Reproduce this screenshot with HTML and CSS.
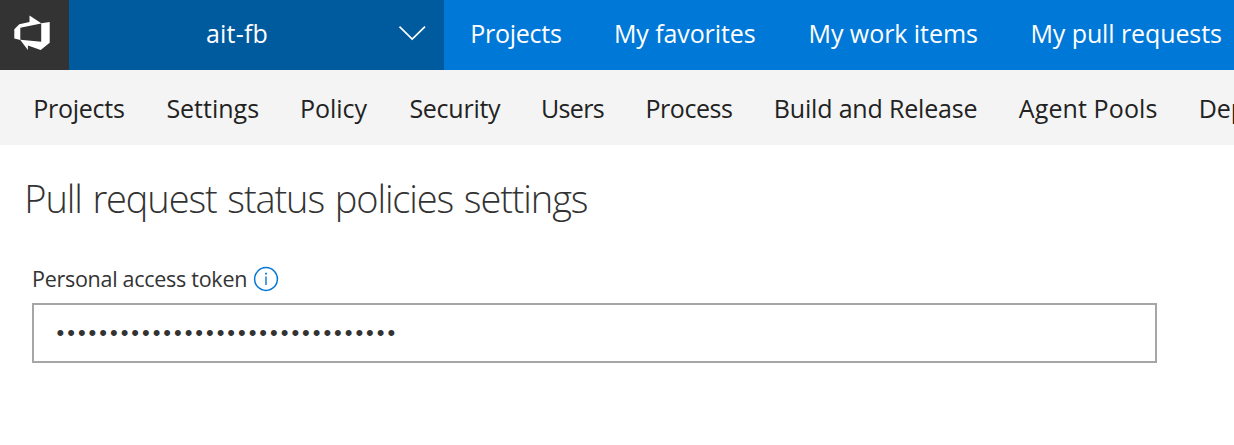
FILE: index.html
```html
<!DOCTYPE html>
<html lang="en">
<head>
<meta charset="utf-8">
<title>Pull request status policies settings</title>
<link rel="stylesheet" href="styles.css">
</head>
<body>
<header class="topbar">
  <a class="logo"><svg width="69" height="70" viewBox="0 0 69 70"><path fill="#fff" fill-rule="evenodd" d="M14.3 29.3 19.3 24.2 29.5 22V15.5L41.3 23.2 49.7 22V42.8L40.7 50 27.9 45.6V50L20.3 40.1 14.3 38.6ZM20.3 27.7V39.8L41.2 41.7V23.4Z"/></svg></a>
  <div class="account"><span class="account-name">ait-fb</span><svg class="chevron" width="28" height="16" viewBox="0 0 28 16"><path fill="none" stroke="#fff" stroke-width="1.7" d="M1.5 1.7 14.2 14 27 1.7"/></svg></div>
  <nav class="main-nav"><a class="m-projects">Projects</a><a class="m-favorites">My favorites</a><a class="m-work">My work items</a><a class="m-pulls">My pull requests</a></nav>
</header>
<nav class="sub-nav"><a class="s-projects">Projects</a><a class="s-settings">Settings</a><a class="s-policy">Policy</a><a class="s-security">Security</a><a class="s-users">Users</a><a class="s-process">Process</a><a class="s-build">Build and Release</a><a class="s-agent">Agent Pools</a><a>Deployment Pools</a></nav>
<main class="content">
  <h1 class="title">Pull request status policies settings</h1>
  <div class="field-head"><label class="label" for="token">Personal access token</label><svg class="info" width="26" height="26" viewBox="0 0 26 26"><circle cx="13" cy="13" r="11.4" fill="none" stroke="#0078d7" stroke-width="1.5"/><path fill="#0078d7" d="M12.3 10.5h1.4v8.5h-1.4zM12.1 6.7h1.8v1.9h-1.8z"/></svg></div>
  <input class="token" id="token" type="password" value="abcdefghijklmnopqrstuvwxyzabcdef">
</main>
</body>
</html>
```
FILE: styles.css
```css
* { box-sizing: border-box; }
body { margin: 0; width: 1234px; height: 445px; overflow: hidden; background: #fff; color: #333; font-family: "Open Sans", "Noto Sans", sans-serif; }
.topbar { display: flex; height: 70px; background: #0078d7; color: #fff; font-size: 25px; line-height: 66px; overflow: hidden; }
.logo { width: 69px; height: 70px; background: #333; flex: none; }
.account { width: 375px; flex: none; display: flex; align-items: center; justify-content: space-between; padding: 0 18px 0 137px; background: #005a9e; }
.account-name { height: 70px; letter-spacing: .2px; }
.chevron { margin-top: -5px; }
.main-nav { display: flex; padding-left: 26.2px; white-space: nowrap; }
.main-nav a, .sub-nav a { flex: none; }
.m-projects { width: 143.8px; letter-spacing: -.25px; }
.m-favorites { width: 194.5px; letter-spacing: -.1px; }
.m-work { width: 222px; letter-spacing: -.05px; }
.m-pulls { letter-spacing: -.1px; }
.sub-nav { display: flex; height: 75px; padding-left: 33.2px; background: #f4f4f4; color: #222; font-size: 25px; line-height: 77px; white-space: nowrap; overflow: hidden; }
.s-projects { width: 133.2px; letter-spacing: -.25px; }
.s-settings { width: 133.5px; }
.s-policy { width: 109.5px; }
.s-security { width: 131.5px; letter-spacing: -.25px; }
.s-users { width: 104.6px; letter-spacing: -.6px; }
.s-process { width: 128.3px; letter-spacing: -.45px; }
.s-build { width: 245.1px; letter-spacing: -.17px; }
.s-agent { width: 179.8px; letter-spacing: .1px; }
.content { padding: 26px 77px 0 32px; }
.title { margin: 0 0 0 -7.7px; font-size: 38px; font-weight: 300; line-height: 54px; letter-spacing: -1.12px; word-spacing: 2px; white-space: nowrap; }
.field-head { display: flex; align-items: center; gap: 6px; height: 32px; margin-top: 38px; }
.label { font-size: 21.5px; line-height: 32px; letter-spacing: -.28px; }
.token { display: block; width: 1125px; height: 60px; margin-top: 8px; padding: 0 22.6px; border: 2px solid #a6a6a6; border-radius: 0; outline: 0; background: #fff; color: #333; font: 22px "Liberation Sans", sans-serif; letter-spacing: 2.97px; }
```
